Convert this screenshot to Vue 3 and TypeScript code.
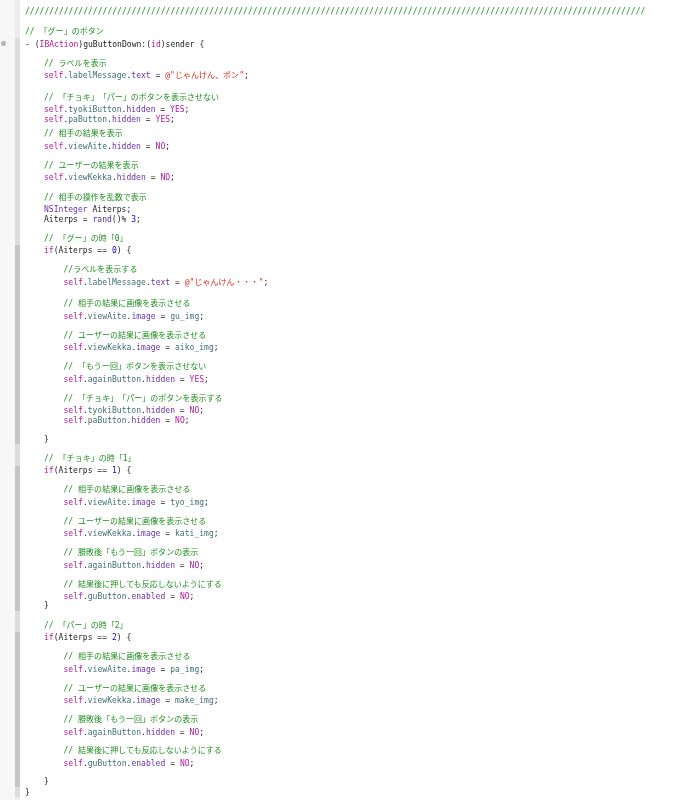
<script setup lang="ts">
type Tok = [string, string];
interface Line { h: number; i: number; t: Tok[] }
const c = (s: string): Tok => ['cm', s];
const p = (s: string): Tok => ['pl', s];
const k = (s: string): Tok => ['kw', s];
const m = (s: string): Tok => ['me', s];
const v = (s: string): Tok => ['va', s];
const prop = (obj: string, attr: string, val: Tok): Tok[] => [k('self'), p('.'), v(obj), p('.'), m(attr), p(' = '), val, p(';')];
const lines: Line[] = [
  { h: 20, i: 0, t: [c('/'.repeat(128))] },
  { h: 12.5, i: 0, t: [c('// 「グー」のボタン')] },
  { h: 19, i: 0, t: [p('- ('), k('IBAction'), p(')guButtonDown:('), k('id'), p(')sender {')] },
  { h: 12.5, i: 1, t: [c('// ラベルを表示')] },
  { h: 21.5, i: 1, t: [k('self'), p('.'), v('labelMessage'), p('.'), m('text'), p(' = '), ['st', '@"じゃんけん、ポン"'], p(';')] },
  { h: 12.5, i: 1, t: [c('// 「チョキ」「パー」のボタンを表示させない')] },
  { h: 10, i: 1, t: prop('tyokiButton', 'hidden', k('YES')) },
  { h: 14, i: 1, t: prop('paButton', 'hidden', k('YES')) },
  { h: 13, i: 1, t: [c('// 相手の結果を表示')] },
  { h: 19, i: 1, t: prop('viewAite', 'hidden', k('NO')) },
  { h: 12, i: 1, t: [c('// ユーザーの結果を表示')] },
  { h: 20, i: 1, t: prop('viewKekka', 'hidden', k('NO')) },
  { h: 12, i: 1, t: [c('// 相手の操作を乱数で表示')] },
  { h: 9.5, i: 1, t: [m('NSInteger'), p(' Aiterps;')] },
  { h: 19, i: 1, t: [p('Aiterps = '), ['fn', 'rand'], p('()% '), ['nu', '3'], p(';')] },
  { h: 12.5, i: 1, t: [c('// 「グー」の時「0」')] },
  { h: 19, i: 1, t: [k('if'), p('(Aiterps == '), ['nu', '0'], p(') {')] },
  { h: 12.5, i: 2, t: [c('//ラベルを表示する')] },
  { h: 21.5, i: 2, t: [k('self'), p('.'), v('labelMessage'), p('.'), m('text'), p(' = '), ['st', '@"じゃんけん・・・"'], p(';')] },
  { h: 13, i: 2, t: [c('// 相手の結果に画像を表示させる')] },
  { h: 19, i: 2, t: prop('viewAite', 'image', v('gu_img')) },
  { h: 12, i: 2, t: [c('// ユーザーの結果に画像を表示させる')] },
  { h: 19, i: 2, t: prop('viewKekka', 'image', v('aiko_img')) },
  { h: 13, i: 2, t: [c('// 「もう一回」ボタンを表示させない')] },
  { h: 18.5, i: 2, t: prop('againButton', 'hidden', k('YES')) },
  { h: 12.5, i: 2, t: [c('// 「チョキ」「パー」のボタンを表示する')] },
  { h: 10, i: 2, t: prop('tyokiButton', 'hidden', k('NO')) },
  { h: 18.5, i: 2, t: prop('paButton', 'hidden', k('NO')) },
  { h: 19, i: 1, t: [p('}')] },
  { h: 12.5, i: 1, t: [c('// 「チョキ」の時「1」')] },
  { h: 19, i: 1, t: [k('if'), p('(Aiterps == '), ['nu', '1'], p(') {')] },
  { h: 13, i: 2, t: [c('// 相手の結果に画像を表示させる')] },
  { h: 19, i: 2, t: prop('viewAite', 'image', v('tyo_img')) },
  { h: 12, i: 2, t: [c('// ユーザーの結果に画像を表示させる')] },
  { h: 19, i: 2, t: prop('viewKekka', 'image', v('kati_img')) },
  { h: 13, i: 2, t: [c('// 勝敗後「もう一回」ボタンの表示')] },
  { h: 19, i: 2, t: prop('againButton', 'hidden', k('NO')) },
  { h: 12, i: 2, t: [c('// 結果後に押しても反応しないようにする')] },
  { h: 9, i: 2, t: prop('guButton', 'enabled', k('NO')) },
  { h: 20, i: 1, t: [p('}')] },
  { h: 12, i: 1, t: [c('// 「パー」の時「2」')] },
  { h: 19, i: 1, t: [k('if'), p('(Aiterps == '), ['nu', '2'], p(') {')] },
  { h: 13, i: 2, t: [c('// 相手の結果に画像を表示させる')] },
  { h: 19, i: 2, t: prop('viewAite', 'image', v('pa_img')) },
  { h: 12, i: 2, t: [c('// ユーザーの結果に画像を表示させる')] },
  { h: 19, i: 2, t: prop('viewKekka', 'image', v('make_img')) },
  { h: 13, i: 2, t: [c('// 勝敗後「もう一回」ボタンの表示')] },
  { h: 18, i: 2, t: prop('againButton', 'hidden', k('NO')) },
  { h: 13, i: 2, t: [c('// 結果後に押しても反応しないようにする')] },
  { h: 18, i: 2, t: prop('guButton', 'enabled', k('NO')) },
  { h: 11, i: 1, t: [p('}')] },
  { h: 9, i: 0, t: [p('}')] },
];
</script>

<template>
  <div class="editor">
    <div class="gutter"><span class="dot"></span></div>
    <div class="ribbon">
      <i class="top"></i>
      <i class="light h207"></i>
      <i class="dark h199"></i>
      <i class="light h22"></i>
      <i class="dark h145"></i>
      <i class="light h21"></i>
      <i class="dark h155"></i>
      <i class="light h10"></i>
      <i class="top grow"></i>
    </div>
    <div class="code">
      <div v-for="(l, n) in lines" :key="n" class="line" :class="'ind' + l.i" :style="{ height: l.h + 'px' }">
        <span v-for="(t, j) in l.t" :key="j" :class="t[0]">{{ t[1] }}</span>
      </div>
    </div>
  </div>
</template>

<style>
html, body { margin: 0; background: #fff; }
</style>

<style scoped>
.editor { display: flex; height: 800px; overflow: hidden; background: #fff; }
.gutter { width: 15px; background: #f7f7f7; position: relative; }
.dot { position: absolute; left: 1px; top: 41px; width: 5px; height: 5px; border-radius: 50%; background: #b4b4b4; }
.ribbon { width: 5px; display: flex; flex-direction: column; }
.ribbon i { display: block; }
.top { height: 38px; background: #ececec; }
.grow { flex: 1; }
.light { background: #dcdcdc; }
.dark { background: #c6c6c6; }
.h207 { height: 207px; }
.h199 { height: 199px; }
.h22 { height: 22px; }
.h145 { height: 145px; }
.h21 { height: 21px; }
.h155 { height: 155px; }
.h10 { height: 10px; }
.code { flex: 1; padding: 6px 0 0 5px; font-family: "DejaVu Sans Mono", "Noto Sans CJK JP", monospace; font-size: 8px; letter-spacing: 0.03px; line-height: 12px; white-space: pre; text-spacing-trim: space-all; filter: blur(0.3px); color: #222; }
.line { overflow: visible; }
.ind1 { padding-left: 19px; }
.ind2 { padding-left: 38.5px; }
.cm { color: #1f8f1f; }
.pl { color: #222; }
.kw { color: #b5179e; }
.me { color: #6a32a8; }
.va { color: #3f6e74; }
.st { color: #d8281e; }
.fn { color: #4d2aa0; }
.nu { color: #1c00cf; }
</style>
